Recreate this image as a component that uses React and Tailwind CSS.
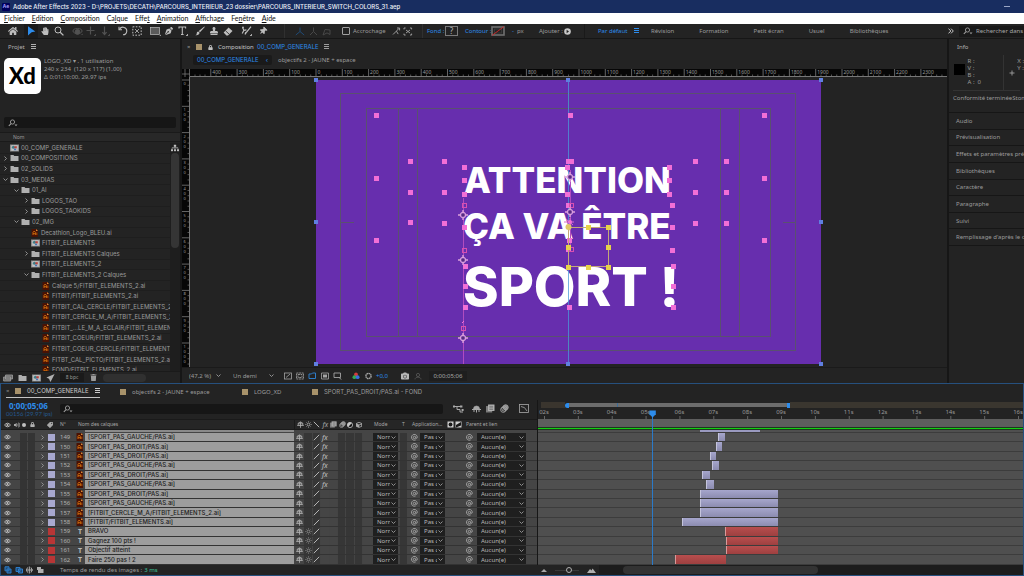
import React, { useState } from "react";
import {
  FaHome,
  FaHandPaper,
  FaStamp,
  FaThumbtack,
  FaPenNib,
  FaTrash,
  FaCamera,
  FaVolumeUp,
  FaLock,
  FaTag,
  FaSitemap,
  FaCube,
} from "react-icons/fa";

const MENUS = [
  "Fichier",
  "Edition",
  "Composition",
  "Calque",
  "Effet",
  "Animation",
  "Affichage",
  "Fenêtre",
  "Aide",
];
const MENU_KEYS = [0, 0, 0, 2, 4, 0, 0, 2, 0];

const WORKSPACES = ["Révision", "Formation", "Petit écran", "Usuel", "Bibliothèques"];

const PROJECT_ITEMS = [
  { name: "00_COMP_GENERALE", type: "comp", level: 0 },
  { name: "00_COMPOSITIONS", type: "folder", level: 0, arrow: "closed" },
  { name: "02_SOLIDS", type: "folder", level: 0, arrow: "closed" },
  { name: "03_MEDIAS", type: "folder", level: 0, arrow: "open" },
  { name: "01_AI", type: "folder", level: 1, arrow: "open" },
  { name: "LOGOS_TAO", type: "folder", level: 2, arrow: "closed" },
  { name: "LOGOS_TAOKIDS", type: "folder", level: 2, arrow: "closed" },
  { name: "02_IMG", type: "folder", level: 1, arrow: "open" },
  { name: "Decathlon_Logo_BLEU.ai", type: "ai", level: 2 },
  { name: "FITBIT_ELEMENTS", type: "comp", level: 2 },
  { name: "FITBIT_ELEMENTS Calques", type: "folder", level: 2, arrow: "closed" },
  { name: "FITBIT_ELEMENTS_2", type: "comp", level: 2 },
  { name: "FITBIT_ELEMENTS_2 Calques", type: "folder", level: 2, arrow: "open" },
  { name: "Calque 5/FITBIT_ELEMENTS_2.ai", type: "ai", level: 3 },
  { name: "FITBIT/FITBIT_ELEMENTS_2.ai", type: "ai", level: 3 },
  { name: "FITBIT_CAL_CERCLE/FITBIT_ELEMENTS_2.ai", type: "ai", level: 3 },
  { name: "FITBIT_CERCLE_M_A/FITBIT_ELEMENTS_2.ai", type: "ai", level: 3 },
  { name: "FITBIT_...LE_M_A_ECLAIR/FITBIT_ELEMENTS_2.ai", type: "ai", level: 3 },
  { name: "FITBIT_COEUR/FITBIT_ELEMENTS_2.ai", type: "ai", level: 3 },
  { name: "FITBIT_COEUR_CERCLE/FITBIT_ELEMENTS_2.ai", type: "ai", level: 3 },
  { name: "FITBT_CAL_PICTO/FITBIT_ELEMENTS_2.ai", type: "ai", level: 3 },
  { name: "FOND/FITBIT_ELEMENTS_2.ai", type: "ai", level: 3 },
];

const INDENTS = ["pl-0", "pl-[11px]", "pl-[21px]", "pl-[32px]"];

const PANELS = [
  "Audio",
  "Prévisualisation",
  "Effets et paramètres prédéfinis",
  "Bibliothèques",
  "Caractère",
  "Paragraphe",
  "Suivi",
  "Remplissage d'après le contenu",
];

// start / end are in timeline pixels
const LAYERS = [
  { id: 149, name: "[SPORT_PAS_GAUCHE/PAS.ai]", fx: true, start: 180, end: 187 },
  { id: 150, name: "[SPORT_PAS_DROIT/PAS.ai]", fx: true, start: 178, end: 184 },
  { id: 151, name: "[SPORT_PAS_DROIT/PAS.ai]", fx: true, start: 172, end: 178 },
  { id: 152, name: "[SPORT_PAS_GAUCHE/PAS.ai]", fx: true, start: 174, end: 181 },
  { id: 153, name: "[SPORT_PAS_DROIT/PAS.ai]", fx: true, start: 164, end: 172 },
  { id: 154, name: "[SPORT_PAS_GAUCHE/PAS.ai]", fx: true, start: 168, end: 176 },
  { id: 155, name: "[SPORT_PAS_DROIT/PAS.ai]", start: 162, end: 240 },
  { id: 156, name: "[SPORT_PAS_GAUCHE/PAS.ai]", start: 162, end: 240 },
  { id: 157, name: "[FITBIT_CERCLE_M_A/FITBIT_ELEMENTS_2.ai]", start: 162, end: 240 },
  { id: 158, name: "[FITBIT/FITBIT_ELEMENTS.ai]", start: 144, end: 240 },
  { id: 159, name: "BRAVO", text: true, start: 187, end: 240 },
  { id: 160, name: "Gagnez 100 pts !", text: true, start: 188, end: 240 },
  { id: 161, name: "Objectif atteint", text: true, start: 188, end: 240 },
  { id: 162, name: "Faire 250 pas ! 2", text: true, start: 137, end: 188 },
];

const PINK_HANDLES = [
  [60, 35], [254, 35], [448, 35], [60, 98], [448, 98], [60, 160], [448, 160],
  [94, 81], [128, 81], [94, 112], [128, 112], [94, 142], [128, 143],
  [379, 81], [410, 81], [379, 112], [410, 112], [379, 143], [410, 143],
  [148, 87], [148, 100], [148, 114], [252, 81], [255, 81], [251, 87], [251, 114],
  [353, 87], [353, 100], [353, 114], [252, 125], [356, 125], [148, 147],
  [356, 147], [356, 170], [252, 169], [253, 160], [149, 186], [149, 206], [149, 227],
  [253, 227], [357, 186], [357, 206], [357, 227],
];
const PINK_OUTLINES = [[148, 125], [148, 170], [147, 248], [255, 125], [255, 169]];
const ANCHORS = [[147, 135], [147, 180], [147, 258], [254, 97], [254, 132]];
const BLUE_HANDLES = [
  [0, 0], [252, 0], [505, 0], [0, 142], [505, 142], [0, 284], [252, 284], [505, 284],
];
const YELLOW_HANDLES = [
  [272, 147], [292, 147], [252, 167], [292, 167], [252, 187], [272, 187], [292, 187],
];

function MenuIcon({ className = "" }) {
  return (
    <svg className={className} width="5" height="6" viewBox="0 0 5 6" stroke="currentColor">
      <path d="M0 0.5h5M0 2.5h5M0 4.5h5" strokeWidth="1" />
    </svg>
  );
}

function Chevron({ open = false }) {
  return (
    <svg width="5" height="5" viewBox="0 0 5 5" fill="none" stroke="currentColor">
      <path d={open ? "M0.5 1.5l2 2l2-2" : "M1.5 0.5l2 2l-2 2"} strokeWidth="0.9" />
    </svg>
  );
}

function SearchIcon() {
  return (
    <svg className="shrink-0" width="10" height="8" viewBox="0 0 10 8" fill="none" stroke="#a0a0a0">
      <circle cx="4.5" cy="3" r="2.1" strokeWidth="0.9" />
      <path d="M3 4.6L0.8 7" strokeWidth="1.1" />
      <path d="M6.5 5.6h3l-1.5 1.6z" fill="#a0a0a0" stroke="none" />
    </svg>
  );
}

function AiIcon() {
  return (
    <svg className="shrink-0" width="8" height="8" viewBox="0 0 8 8">
      <path d="M0.5 0h5L7 1.6V8H0.5z" fill="#4a1204" />
      <path d="M5 0l2 2H5z" fill="#d98a3a" />
      <path d="M2 6V3.4L3.2 2L4.4 3.4V6M2 4.7h2.4" fill="none" stroke="#e0780f" strokeWidth="0.8" />
      <path d="M5.8 3.6V6" stroke="#c9640f" strokeWidth="0.8" />
    </svg>
  );
}

function CompIcon() {
  return (
    <svg className="shrink-0" width="9" height="8" viewBox="0 0 9 8">
      <rect x="0" y="0.5" width="9" height="7" fill="#8d8d8d" />
      <rect x="1.2" y="1.2" width="6.6" height="5.6" fill="#c4c4c4" />
      <circle cx="3.4" cy="3.3" r="1.5" fill="#3f7d86" />
      <rect x="4.4" y="2.2" width="2.4" height="2.2" fill="#b8423c" />
      <path d="M3.6 6.2l1.4-2.2l1.6 2.2z" fill="#3d6fb5" />
    </svg>
  );
}

function FolderIcon() {
  return (
    <svg className="shrink-0" width="9" height="8" viewBox="0 0 9 8" fill="#b0b0b0">
      <path d="M0.5 1h3l0.8 1H8.5v5h-8z" />
    </svg>
  );
}

function EyeIcon() {
  return (
    <svg width="7" height="6" viewBox="0 0 7 6" fill="none" stroke="#c0c0c0">
      <path d="M0.5 3Q3.5 -0.6 6.5 3Q3.5 6.6 0.5 3z" strokeWidth="0.9" />
      <circle cx="3.5" cy="3" r="1.1" fill="#c0c0c0" stroke="none" />
    </svg>
  );
}

function ShyIcon() {
  return (
    <svg width="7" height="7" viewBox="0 0 7 7" fill="none" stroke="#b4b4b4">
      <path d="M1.2 4V2.2Q3.5-0.4 5.8 2.2V4M0.2 4.5h6.6M1.2 2.8h4.6M3.5 1v5.8" strokeWidth="0.8" />
    </svg>
  );
}

function SunIcon({ color = "#8a8a8a" }) {
  return (
    <svg width="7" height="7" viewBox="0 0 7 7" fill="none" stroke={color}>
      <circle cx="3.5" cy="3.5" r="1.4" strokeWidth="0.9" />
      <path
        d="M3.5 0.2v1M3.5 5.8v1M0.2 3.5h1M5.8 3.5h1M1.2 1.2l0.6 0.6M5.2 5.2l0.6 0.6M5.8 1.2l-0.6 0.6M1.2 5.8l0.6-0.6"
        strokeWidth="0.7"
      />
    </svg>
  );
}

function SlashIcon({ back = false }) {
  return (
    <svg width="7" height="7" viewBox="0 0 7 7" stroke="#c4c4c4" strokeWidth="0.9">
      <path d={back ? "M0.8 0.8l5.4 5.4" : "M0.8 6.2l5.4-5.4"} />
    </svg>
  );
}

function WhipIcon() {
  return (
    <svg width="7" height="7" viewBox="0 0 7 7" fill="none" stroke="#b0b0b0">
      <path
        d="M4.7 3.5a1.2 1.2 0 1 1-1.2-1.2a1.2 1.2 0 0 1 1.2 1.2c0 1.3 1.6 1 1.6-0.2a2.9 2.9 0 1 0-1.6 2.6"
        strokeWidth="0.8"
      />
    </svg>
  );
}

function BlendIcon({ size = 7 }) {
  return (
    <svg width={size} height={size} viewBox="0 0 7 7">
      <rect x="0" y="1.6" width="4.8" height="5" fill="#7c7c7c" />
      <rect x="1.6" y="0.4" width="5" height="5" fill="#b4b4b4" />
      <path d="M2.6 1.8h3M2.6 3h3M2.6 4.2h3" stroke="#555" strokeWidth="0.5" />
    </svg>
  );
}

function BlurIcon({ size = 7 }) {
  return (
    <svg width={size} height={size} viewBox="0 0 7 7" fill="none" stroke="#a4a4a4" strokeWidth="0.7">
      <circle cx="4.4" cy="2.6" r="2" fill="#8a8a8a" />
      <circle cx="3.4" cy="3.6" r="2" />
      <circle cx="2.5" cy="4.5" r="2" />
    </svg>
  );
}

function ToolButton({ label, className = "", children }) {
  return (
    <button
      type="button"
      aria-label={label}
      className={`flex h-full w-[14px] shrink-0 items-center justify-center ${className}`}
    >
      {children}
    </button>
  );
}

function TitleBar() {
  return (
    <header className="flex h-[13px] shrink-0 items-center bg-[#182d60] pl-[2px] text-[#eef1f8]">
      <div className="flex h-[8px] w-[8px] items-center justify-center rounded-[1px] bg-[#00005b] text-[5px] leading-none font-bold text-[#a9a4ff]">
        Ae
      </div>
      <h1 className="ml-[3px] flex-1 font-[Inter] text-[6px] leading-none font-medium whitespace-nowrap">
        Adobe After Effects 2023 - D:\PROJETS\DECATH\PARCOURS_INTERIEUR_23
        dossier\PARCOURS_INTERIEUR_SWITCH_COLORS_31.aep
      </h1>
      <button type="button" aria-label="Réduire" className="mr-[14px] h-px w-[6px] bg-[#9aa6c6]" />
    </header>
  );
}

function MenuBar() {
  return (
    <nav className="flex h-[11px] shrink-0 items-center gap-[7px] bg-white pl-[4px] font-[Lato] text-[7px] leading-none text-[#101010]">
      {MENUS.map((menu, i) => (
        <button type="button" key={menu}>
          {menu.slice(0, MENU_KEYS[i])}
          <u>{menu[MENU_KEYS[i]]}</u>
          {menu.slice(MENU_KEYS[i] + 1)}
        </button>
      ))}
    </nav>
  );
}

function Toolbar() {
  const [snap, setSnap] = useState(false);

  return (
    <div className="flex h-[15px] shrink-0 items-center border-b border-[#161616] bg-[#232323] text-[6px] leading-none whitespace-nowrap text-[#9c9c9c]">
      <div className="flex h-full w-[284px] shrink-0 items-center text-[#bdbdbd]">
        <ToolButton label="Accueil" className="ml-[6px]">
          <FaHome size={10} />
        </ToolButton>
        <ToolButton label="Sélection" className="ml-[4px] bg-[#1b1b1b]">
          <svg width="9" height="10" viewBox="0 0 9 10" fill="#2d8ceb">
            <path d="M1 0.3L8.3 5.6L4.6 6.3L1 9.6z" />
          </svg>
        </ToolButton>
        <ToolButton label="Main">
          <FaHandPaper size={8} />
        </ToolButton>
        <ToolButton label="Zoom">
          <svg width="10" height="10" viewBox="0 0 10 10" fill="none" stroke="currentColor">
            <circle cx="4" cy="4" r="3" strokeWidth="1" />
            <path d="M6.2 6.2L9.4 9.4" strokeWidth="1.3" />
          </svg>
        </ToolButton>
        <ToolButton label="Orbite" className="ml-[4px] text-[#525252]">
          <svg width="11" height="9" viewBox="0 0 11 9" fill="none" stroke="currentColor">
            <ellipse cx="5.5" cy="4" rx="4.5" ry="2.4" />
            <circle cx="5.5" cy="5" r="2.4" fill="currentColor" />
            <path d="M9 8h1.6v-1.6z" fill="currentColor" stroke="none" />
          </svg>
        </ToolButton>
        <ToolButton label="Panoramique" className="text-[#525252]">
          <svg width="10" height="10" viewBox="0 0 10 10" fill="none" stroke="currentColor">
            <path d="M4.5 0.5v8M0.5 4.5h8" strokeWidth="1.2" />
            <path d="M8.4 9.6h1.2v-1.2z" fill="currentColor" />
          </svg>
        </ToolButton>
        <ToolButton label="Travelling" className="text-[#525252]">
          <svg width="10" height="10" viewBox="0 0 10 10" fill="none" stroke="currentColor">
            <path d="M4.5 0.5v8M2.4 6.2l2.1 2.3l2.1-2.3" strokeWidth="1.2" />
            <path d="M8.4 9.6h1.2v-1.2z" fill="currentColor" />
          </svg>
        </ToolButton>
        <ToolButton label="Rotation" className="ml-[4px]">
          <svg width="10" height="10" viewBox="0 0 10 10" fill="none" stroke="currentColor">
            <path d="M1.6 3.2A3.8 3.8 0 1 1 5 8.8" strokeWidth="1.1" />
            <path d="M1 0.8v3h3" strokeWidth="1.1" />
          </svg>
        </ToolButton>
        <ToolButton label="Point d'ancrage">
          <svg width="10" height="10" viewBox="0 0 10 10" fill="none" stroke="currentColor">
            <rect x="0.8" y="0.8" width="8.4" height="8.4" strokeDasharray="1.6 1.4" />
            <path d="M3 3l4 4M7 3L3 7" strokeWidth="0.8" />
          </svg>
        </ToolButton>
        <ToolButton label="Rectangle" className="ml-[4px]">
          <svg width="11" height="9" viewBox="0 0 11 9" stroke="currentColor">
            <rect x="0.5" y="0.5" width="9" height="7" fill="#5a5a5a" strokeWidth="0.7" />
            <path d="M9.4 9h1.4v-1.4z" fill="currentColor" stroke="none" />
          </svg>
        </ToolButton>
        <ToolButton label="Plume">
          <FaPenNib size={8} />
        </ToolButton>
        <ToolButton label="Texte">
          <svg width="10" height="10" viewBox="0 0 10 10" fill="none" stroke="currentColor">
            <path d="M1 2.4V1h6.6v1.4M4.3 1v7.4M3 8.5h2.6" strokeWidth="1.1" />
            <path d="M8.4 9.6h1.2v-1.2z" fill="currentColor" />
          </svg>
        </ToolButton>
        <ToolButton label="Pinceau" className="ml-[3px]">
          <svg width="10" height="10" viewBox="0 0 10 10" fill="currentColor">
            <path d="M9.4 0.4L3.8 5L5 6.2L9.8 0.9zM3.3 5.5Q1.6 5.6 1.7 7.4T0.3 9.2Q4.2 9.6 4.6 6.8z" />
          </svg>
        </ToolButton>
        <ToolButton label="Tampon">
          <FaStamp size={8} />
        </ToolButton>
        <ToolButton label="Gomme">
          <svg width="10" height="9" viewBox="0 0 10 9" fill="currentColor">
            <path d="M5.6 0.5L9.5 4L5 8.5H3.4L0.6 5.6z" />
            <path d="M2.6 3.8L6 7" stroke="#232323" strokeWidth="0.8" />
          </svg>
        </ToolButton>
        <ToolButton label="Roto-pinceau" className="ml-[4px]">
          <svg width="11" height="10" viewBox="0 0 11 10" fill="none" stroke="currentColor">
            <path d="M10 0.6L5.6 6L4 8.4L5 6M1.6 1.4l1.2 3L1.2 7.6M2.8 4.4l2.6-0.6" strokeWidth="1.2" />
            <circle cx="2" cy="1.4" r="0.9" fill="currentColor" stroke="none" />
            <path d="M9.4 9.6h1.2v-1.2z" fill="currentColor" />
          </svg>
        </ToolButton>
        <ToolButton label="Marionnette" className="ml-[3px]">
          <FaThumbtack size={8} className="rotate-45" />
        </ToolButton>
      </div>

      <div className="flex h-full w-[58px] shrink-0 items-center border-l border-[#303030] pl-[9px] text-[#484848]">
        <svg width="40" height="9" viewBox="0 0 40 9" fill="none" stroke="currentColor">
          <path d="M6 0.5v4L1.8 8M6 4.5L10.2 8" stroke="#1f4a75" />
          <path d="M19.5 0.5v4L16 8M19.5 4.5L23 8" />
          <path d="M29 8l2-5.5l5 0.5v4.5l-3-1.6z" />
        </svg>
      </div>
      <label className="flex w-[50px] shrink-0 items-center gap-[3px]">
        <input
          type="checkbox"
          checked={snap}
          onChange={(e) => setSnap(e.target.checked)}
          className="h-[8px] w-[8px] shrink-0 appearance-none rounded-[1px] border border-[#a0a0a0] checked:bg-[#2d8ceb]"
        />
        Accrochage
      </label>
      <svg className="shrink-0" width="30" height="9" viewBox="0 0 30 9" fill="none" stroke="currentColor">
        <path d="M1 7.5l3.4-3.4l1.8 3M4.4 4.1L7 1.4M5 1h2.6v2.4" />
        <path d="M12 2.4V1h1.6M18 1h1.6v1.4M19.6 6.6V8H18M13.6 8H12V6.6M14 3l4 3M18 3l-4 3" />
      </svg>
      <div className="flex h-full shrink-0 items-center border-l border-[#303030] pl-[4px]">
        <button type="button" className="w-[18px] text-left text-[#2d8ceb]">
          Fond :
        </button>
        <button
          type="button"
          className="flex h-[10px] w-[13px] items-center justify-center border border-[#7a7a7a] text-[8px] leading-none text-[#b5b5b5]"
        >
          ?
        </button>
        <button type="button" className="ml-[7px] w-[26px] text-left text-[#2d8ceb]">
          Contour :
        </button>
        <button type="button" aria-label="Couleur du contour">
          <svg width="14" height="10" viewBox="0 0 14 10" fill="none">
            <rect x="1" y="1" width="12" height="8" stroke="#707070" strokeWidth="1.6" />
            <rect x="3.4" y="3" width="7.2" height="4" stroke="#3c3c3c" />
            <path d="M1 9.4L13 0.6" stroke="#d02828" strokeWidth="0.9" />
          </svg>
        </button>
        <span className="ml-[7px] text-[#2d8ceb]">-</span>
        <span className="ml-[3px] w-[22px]">px</span>
        <span className="w-[25px]">Ajouter :</span>
        <button type="button" aria-label="Ajouter">
          <svg width="7" height="7" viewBox="0 0 7 7">
            <circle cx="3.5" cy="3.5" r="3.3" fill="#c8c8c8" />
            <path d="M2.6 1.8l2.4 1.7l-2.4 1.7z" fill="#232323" />
          </svg>
        </button>
      </div>
      <div className="ml-[13px] flex h-full flex-1 items-center border-l border-[#1a1a1a] pl-[13px]">
        <button type="button" className="w-[36px] text-left text-[#2d8ceb]">
          Par défaut
        </button>
        <MenuIcon className="text-[#2d8ceb]" />
        <div className="ml-[12px] flex items-center gap-[25px]">
          {WORKSPACES.map((name) => (
            <button type="button" key={name}>
              {name}
            </button>
          ))}
        </div>
        <button type="button" aria-label="Plus d'espaces" className="mr-[5px] ml-auto text-[#c8c8c8]">
          <svg width="6" height="6" viewBox="0 0 6 6" fill="none" stroke="currentColor">
            <path d="M0.5 0.6L2.8 3L0.5 5.4M3 0.6L5.3 3L3 5.4" />
          </svg>
        </button>
      </div>
      <label className="flex h-[11px] w-[65px] shrink-0 items-center bg-[#191919] pl-[4px]">
        <SearchIcon />
        <input
          type="text"
          aria-label="Rechercher dans l'aide"
          placeholder="Rechercher dans l'aide"
          className="ml-[3px] w-full min-w-0 bg-transparent text-[6px] leading-none outline-none placeholder:text-[#a8a8a8]"
        />
      </label>
    </div>
  );
}

function ProjectPanel() {
  const [search, setSearch] = useState("");

  return (
    <section className="flex w-[180px] shrink-0 flex-col bg-[#232323] text-[6px] leading-none whitespace-nowrap text-[#9c9c9c]">
      <div className="flex h-[16px] shrink-0 items-center gap-[6px] pl-[8px] text-[#b0b0b0]">
        <h2>Projet</h2>
        <MenuIcon />
      </div>
      <div className="flex h-[61px] shrink-0 gap-[3px] pt-[3px] pl-[4px]">
        <div className="flex h-[36px] w-[37px] items-center justify-center rounded-[5px] bg-white font-[Lato] text-[22px] leading-none font-black text-black">
          Xd
        </div>
        <div className="flex flex-col gap-px leading-[7px]">
          <p>LOGO_XD ▾ , 1 utilisation</p>
          <p>240 x 234 &nbsp;(120 x 117) (1,00)</p>
          <p>Δ 0;01;10;00, 29,97 ips</p>
        </div>
      </div>
      <label className="mx-[4px] mt-[1px] flex h-[11px] shrink-0 items-center rounded-[2px] bg-[#161616] pl-[4px]">
        <SearchIcon />
        <input
          type="text"
          aria-label="Rechercher dans le projet"
          value={search}
          onChange={(e) => setSearch(e.target.value)}
          className="w-full bg-transparent outline-none"
        />
      </label>
      <div className="mt-[4px] flex h-[10px] shrink-0 items-center border-y border-[#1a1a1a] bg-[#282828] pl-[13px] text-[5px]">
        Nom
      </div>
      <div className="flex min-h-0 flex-1 overflow-hidden pt-px">
        <ul className="flex h-[233px] min-w-0 flex-1 flex-col font-[Inter]">
          {PROJECT_ITEMS.map((item) => (
            <li
              key={item.name}
              className={`flex min-h-0 flex-1 items-center overflow-hidden border-b border-[#1e1e1e] ${INDENTS[item.level]}`}
            >
              <span className="flex w-[10px] shrink-0 justify-center">
                {item.arrow && <Chevron open={item.arrow === "open"} />}
              </span>
              {item.type === "ai" && <AiIcon />}
              {item.type === "comp" && <CompIcon />}
              {item.type === "folder" && <FolderIcon />}
              <span className="ml-[2px]">{item.name}</span>
            </li>
          ))}
        </ul>
        <div className="flex w-[10px] shrink-0 flex-col items-center bg-[#1e1e1e] pt-[1px] text-[#c0c0c0]">
          <FaSitemap size={8} />
          <div className="mt-[1px] h-[95px] w-[8px] rounded-full bg-[#353535]" />
        </div>
      </div>
      <div className="flex h-[12px] shrink-0 items-center gap-[5px] border-t border-[#1a1a1a] pl-[3px]">
        <svg width="10" height="8" viewBox="0 0 10 8" fill="none" stroke="#a0a0a0">
          <path d="M2.5 1h7v4h-7zM0.6 3h7v4h-7z" fill="#6a6a6a" strokeWidth="0.8" />
        </svg>
        <FolderIcon />
        <CompIcon />
        <svg width="9" height="8" viewBox="0 0 9 8" fill="#b0b0b0">
          <path d="M8.6 0L0.4 3.6l2.6 1.2L4.4 8l1.4-2.6z" />
        </svg>
        <button
          type="button"
          className="flex h-[9px] w-[24px] items-center justify-center bg-[#1a1a1a] text-[5px]"
        >
          8 bpc
        </button>
        <FaTrash size={7} className="mx-px" />
        <div className="h-[8px] w-[43px] rounded-full bg-[#303030]" />
      </div>
    </section>
  );
}

function HorizontalRuler() {
  const labels = [];
  for (let n = -400; n <= 2300; n += 100) labels.push(n);
  const origin = 126;
  const step = 26.3;

  return (
    <svg className="block h-[8px] min-w-0 flex-1 bg-[#060606]" fill="none">
      {labels.map((n) => {
        const x = origin + (n / 100) * step;
        return (
          <g key={n}>
            <path d={`M${x} 0v8`} stroke="#7c7c7c" strokeWidth="0.8" />
            {[1, 2, 3, 4].map((m) => (
              <path key={m} d={`M${x + (m * step) / 5} 5.5v2.5`} stroke="#6a6a6a" strokeWidth="0.8" />
            ))}
            <text x={x + 1.5} y="5" fontSize="5" fill="#9a9a9a">
              {Math.abs(n)}
            </text>
          </g>
        );
      })}
      <path d="M5 5.5v2.5M10 5.5v2.5M15 5.5v2.5" stroke="#6a6a6a" strokeWidth="0.8" />
      <path d="M0 7.5h800" stroke="#777" />
    </svg>
  );
}

function VerticalRuler() {
  const labels = [];
  for (let n = 0; n <= 1000; n += 100) labels.push(n);
  const step = 26.3;

  return (
    <svg className="block w-[8px] shrink-0 bg-[#060606]" fill="none">
      {labels.map((n) => {
        const y = 3 + (n / 100) * step;
        return (
          <g key={n}>
            <path d={`M0 ${y}h8`} stroke="#7c7c7c" strokeWidth="0.8" />
            {[1, 2, 3, 4].map((m) => (
              <path key={m} d={`M5.5 ${y + (m * step) / 5}h2.5`} stroke="#6a6a6a" strokeWidth="0.8" />
            ))}
            {String(n)
              .split("")
              .map((digit, i) => (
                <text key={i} x="1.5" y={y + 5 + i * 5} fontSize="4" fill="#9a9a9a">
                  {digit}
                </text>
              ))}
          </g>
        );
      })}
      <path d="M7.5 0v400" stroke="#777" />
    </svg>
  );
}

function Guides() {
  return (
    <svg
      className="absolute inset-0 overflow-visible"
      width="505"
      height="284"
      viewBox="0 0 505 284"
      fill="none"
    >
      <g stroke="#5a5070" strokeWidth="1">
        <rect x="24.5" y="13.5" width="455" height="257" />
        <rect x="50.5" y="28.5" width="404" height="228" />
        <path d="M82.5 28v228M101.5 28v228M404.5 28v228M423.5 28v228" />
        <path d="M25 142.5h13M467 142.5h13M252.5 13v14M252.5 258v13" />
      </g>
      <path d="M252.5 0v284" stroke="#4a9ad8" strokeWidth="1" opacity="0.75" />
      <path d="M147.5 118v166" stroke="#b04cc0" strokeWidth="1" />
      <path d="M254.5 90v82" stroke="#b04cc0" strokeWidth="1" />
      {PINK_HANDLES.map(([x, y], i) => (
        <rect key={i} x={x - 2} y={y - 2} width="5" height="5" fill="#f26fd6" />
      ))}
      {PINK_OUTLINES.map(([x, y], i) => (
        <rect key={i} x={x - 1.5} y={y - 1.5} width="4" height="4" stroke="#d84fb0" />
      ))}
      {ANCHORS.map(([x, y], i) => (
        <g key={i} transform={`translate(${x} ${y})`} stroke="#dba0dc">
          <circle r="2.6" strokeWidth="1.2" fill="#6b3a9e" />
          <path d="M-5 0h2M3 0h2M0-5v2M0 3v2" strokeWidth="1.4" />
          <circle r="0.8" fill="#3c2050" stroke="none" />
        </g>
      ))}
      <path d="M146 243l2-2" stroke="#f26fd6" />
      <rect x="252.5" y="147.5" width="40" height="39" stroke="#c4a878" />
      {YELLOW_HANDLES.map(([x, y], i) => (
        <rect key={i} x={x - 2} y={y - 2} width="5" height="5" fill="#e6d34a" />
      ))}
      <path d="M248 142h10M254 138v8M250 139l7 6" stroke="#d86fd0" strokeWidth="1" />
      <circle cx="254" cy="142" r="2" fill="#f26fd6" />
      <circle cx="252.5" cy="147" r="3" fill="#e0c868" />
      {BLUE_HANDLES.map(([x, y], i) => (
        <rect key={i} x={x - 2} y={y - 2} width="4" height="4" fill="#5f7fe0" />
      ))}
    </svg>
  );
}

function CompositionPanel() {
  return (
    <section className="flex min-w-0 flex-1 flex-col bg-[#232323] text-[6px] leading-none whitespace-nowrap text-[#9c9c9c]">
      <div className="flex h-[16px] shrink-0 items-center pl-[5px]">
        <button type="button" className="w-[9px] text-left">
          ×
        </button>
        <span className="h-[6px] w-[6px] bg-[#a8926a]" />
        <FaLock size={5} className="ml-[6px] text-[#c0c0c0]" />
        <h2 className="ml-[5px] w-[39px] text-[#c8c8c8]">Composition</h2>
        <span className="w-[67px] font-[Inter] text-[#2d8ceb]">00_COMP_GENERALE</span>
        <MenuIcon />
      </div>
      <div className="flex h-[14px] shrink-0 items-start pl-[11px]">
        <button type="button" className="flex h-[10px] w-[79px] items-center justify-between rounded-[2px] bg-[#1a1a1a] px-[4px] font-[Inter] text-[#2d8ceb]">
          00_COMP_GENERALE
          <span>‹</span>
        </button>
        <button type="button" className="ml-[6px] h-[10px]">
          objectifs 2 - JAUNE + espace
        </button>
      </div>
      <div className="flex h-[8px] shrink-0">
        <svg className="block w-[8px] bg-[#060606]" viewBox="0 0 8 8" stroke="#777" strokeWidth="0.8">
          <path d="M0 5h8M3 0v8M7.6 0v8" />
        </svg>
        <HorizontalRuler />
      </div>
      <div className="flex min-h-0 flex-1">
        <VerticalRuler />
        <div className="flex flex-1 items-center justify-center">
          <div className="relative h-[284px] w-[505px] bg-[#672eae] font-[Inter] font-extrabold text-white">
            <p className="absolute top-[82px] left-[148px] text-[35px] leading-[36px]">ATTENTION</p>
            <p className="absolute top-[128px] left-[147px] text-[35px] leading-[36px]">ÇA VA ÊTRE</p>
            <p className="absolute top-[180px] left-[147px] text-[54px] leading-[54px]">SPORT !</p>
            <Guides />
          </div>
        </div>
      </div>
      <div className="flex h-[16px] shrink-0 items-center border-t border-[#1a1a1a] pl-[3px]">
        <label className="relative flex w-[42px] items-center">
          <select aria-label="Zoom" className="w-full appearance-none bg-transparent pl-[4px] leading-none">
            <option>(47,2 %)</option>
          </select>
          <span className="absolute right-[6px]">
            <Chevron open />
          </span>
        </label>
        <label className="relative flex w-[50px] items-center">
          <select aria-label="Résolution" className="w-full appearance-none bg-transparent pl-[6px] leading-none">
            <option>Un demi</option>
          </select>
          <span className="absolute right-[3px]">
            <Chevron open />
          </span>
        </label>
        <svg className="ml-[6px]" width="60" height="8" viewBox="0 0 60 8" fill="none" stroke="#a4a4a4">
          <rect x="1.5" y="1" width="7" height="6" strokeWidth="0.8" />
          <path d="M3 5.5l4-3.4" strokeWidth="0.8" />
          <path d="M13.5 1h7v6h-7zM15 2.5h4v3h-4z" strokeWidth="0.8" strokeDasharray="2 0.6" />
          <path d="M26 6.5V2h2.5l1-1h3v5.5z" stroke="#2d7cc8" />
          <path d="M38.5 1h7v6h-7z" strokeWidth="0.8" />
          <rect x="40" y="2.5" width="4" height="3" fill="#a4a4a4" stroke="none" />
          <path d="M51 1h6.5v4.5H51zM56 5.5l2.4 2" strokeWidth="0.9" />
        </svg>
        <svg className="ml-[8px]" width="25" height="8" viewBox="0 0 25 8">
          <circle cx="5" cy="2.4" r="1.9" fill="#d33c3c" />
          <circle cx="3.4" cy="5.2" r="1.9" fill="#35a853" />
          <circle cx="6.6" cy="5.2" r="1.9" fill="#3a6fe0" />
          <circle cx="17.5" cy="4" r="2.6" fill="none" stroke="#a4a4a4" strokeWidth="1.4" strokeDasharray="1.6 0.4" />
        </svg>
        <span className="w-[25px] text-[#2d8ceb]">+0,0</span>
        <FaCamera size={8} className="text-[#b8b8b8]" />
        <svg className="ml-[5px]" width="9" height="8" viewBox="0 0 9 8" fill="none" stroke="#505050">
          <circle cx="4" cy="3" r="1.6" />
          <path d="M1 7.4c0-3 6-3 6 0" />
        </svg>
        <button type="button" className="ml-[6px] h-[10px] w-[38px] bg-[#1e1e1e] text-[#a8a8a8]">
          0;00;05;06
        </button>
      </div>
    </section>
  );
}

function SidePanels() {
  return (
    <aside className="w-[75px] shrink-0 overflow-hidden bg-[#232323] text-[6px] leading-none whitespace-nowrap text-[#9c9c9c]">
      <h2 className="flex h-[16px] items-center pl-[8px] text-[#b0b0b0]">Info</h2>
      <div className="flex h-[35px] pl-[5px]">
        <div className="mt-[9px] h-[11px] w-[11px] bg-black" />
        <dl className="ml-[3px] grid w-[38px] grid-cols-[10px_1fr] content-start border-r border-[#333] pt-[3px] leading-[7px]">
          <dt>R :</dt>
          <dd />
          <dt>V :</dt>
          <dd />
          <dt>B :</dt>
          <dd />
          <dt>A :</dt>
          <dd>0</dd>
        </dl>
        <svg className="mt-[15px] ml-[5px] shrink-0" width="6" height="6" viewBox="0 0 6 6" stroke="#a0a0a0">
          <path d="M3 0.5v5M0.5 3h5" strokeWidth="0.9" />
        </svg>
        <div className="ml-[2px] pt-[3px] leading-[7px]">
          <p>X :</p>
          <p>Y :</p>
        </div>
      </div>
      <p className="mx-[4px] flex h-[22px] border-t border-[#333] pt-[4px]">
        Conformité terminéeStom
      </p>
      <div className="flex h-[134px] flex-col border-t border-[#161616]">
        {PANELS.map((panel) => (
          <button
            type="button"
            key={panel}
            className="flex flex-1 items-center border-b border-[#161616] pl-[7px] text-left"
          >
            {panel}
          </button>
        ))}
      </div>
    </aside>
  );
}

function Switch({ dark = false, children }) {
  return (
    <span className="flex h-full flex-1 items-center justify-center border-r border-[#444]">
      <span className={`flex h-full w-full items-center justify-center ${dark ? "bg-[#363636]" : ""}`}>
        {children}
      </span>
    </span>
  );
}

function CellSelect({ label, value, className }) {
  return (
    <span className={`relative flex h-full items-center bg-[#1f1f1f] text-[#b8b8b8] ${className}`}>
      <select
        aria-label={label}
        className="h-full w-full appearance-none bg-transparent pr-[8px] pl-[4px] text-[6px] leading-none"
      >
        <option>{value}</option>
      </select>
      <span className="pointer-events-none absolute right-[2px] text-[#9a9a9a]">
        <Chevron open />
      </span>
    </span>
  );
}

function LayerRow({ layer }) {
  return (
    <tr className="flex min-h-0 flex-1 border-b border-[#333] bg-[#454545]">
      <td className="flex w-[36px] items-center">
        <span className="flex w-[13px] justify-center">
          <EyeIcon />
        </span>
        <span className="ml-[6px] h-full w-[7px] bg-[#343434]" />
        <span className="ml-[1px] h-full w-[7px] bg-[#343434]" />
      </td>
      <td className="flex w-[10px] items-center justify-center text-[#989898]">
        <Chevron />
      </td>
      <td className="flex w-[10px] items-center pl-[1px]">
        <span className={`h-[7px] w-[7px] ${layer.text ? "bg-[#b83636]" : "bg-[#a9a9cf]"}`} />
      </td>
      <td className="flex w-[18px] items-center pl-[3px] text-[#b0b0b0]">{layer.id}</td>
      <td className="flex w-[10px] items-center justify-center text-[7px] font-bold text-[#b8b8b8]">
        {layer.text ? "T" : <AiIcon />}
      </td>
      <td className="flex w-[209px] items-center bg-[#9d9d9d] pl-[3px] font-[Inter] leading-none font-medium text-[#1c1c1c]">
        {layer.name}
      </td>
      <td className="flex w-[79px] pl-[2px]">
        <div className="flex h-full w-[67px]">
          <Switch>
            <ShyIcon />
          </Switch>
          <Switch dark>{layer.text && <SunIcon />}</Switch>
          <Switch dark>
            <SlashIcon />
          </Switch>
          <Switch>{layer.fx && <i className="text-[7px] text-[#c0c0c0]">fx</i>}</Switch>
          <Switch />
          <Switch dark />
          <Switch dark />
          <Switch dark />
        </div>
      </td>
      <td className="flex w-[25px]">
        <CellSelect label="Mode" value="Normal" className="w-full" />
      </td>
      <td className="flex w-[10px] pl-[2px]">
        <span className="h-full w-[7px] bg-[#363636]" />
      </td>
      <td className="flex w-[38px] items-center">
        <span className="flex w-[12px] justify-center">
          <WhipIcon />
        </span>
        <CellSelect label="Application" value="Pas de cache" className="w-[25px]" />
      </td>
      <td className="flex flex-1 items-center pl-[17px]">
        <span className="flex w-[12px] justify-center">
          <WhipIcon />
        </span>
        <CellSelect label="Parent et lien" value="Aucun(e)" className="ml-[2px] w-[49px]" />
      </td>
    </tr>
  );
}

function LayerTable() {
  return (
    <table className="flex min-h-0 flex-1 flex-col text-[6px] leading-none whitespace-nowrap">
      <thead className="block shrink-0">
        <tr className="flex h-[11px] border-y border-[#1a1a1a] bg-[#262626] text-left text-[5px] text-[#a8a8a8] *:font-normal">
          <th className="flex w-[36px] items-center" aria-label="Commutateurs AV">
            <span className="flex w-[13px] justify-center">
              <EyeIcon />
            </span>
            <FaVolumeUp size={6} />
            <span className="ml-[2px] h-[4px] w-[4px] rounded-full bg-[#c0c0c0]" />
            <FaLock size={5} className="ml-[4px] text-[#b0b0b0]" />
          </th>
          <th className="w-[10px]" />
          <th className="flex w-[10px] items-center" aria-label="Etiquette">
            <FaTag size={6} className="rotate-90" />
          </th>
          <th className="flex w-[18px] items-center pl-[3px]">N°</th>
          <th className="flex w-[219px] items-center pl-[3px]">Nom des calques</th>
          <th className="flex w-[79px] border-l border-[#1a1a1a] pl-[1px]" aria-label="Options">
            <span className="flex w-[67px] items-center *:flex *:flex-1 *:justify-center">
              <span>
                <ShyIcon />
              </span>
              <span>
                <SunIcon color="#a8a8a8" />
              </span>
              <span>
                <SlashIcon back />
              </span>
              <i className="text-[7px] leading-none">fx</i>
              <span>
                <BlendIcon />
              </span>
              <span>
                <BlurIcon />
              </span>
              <span>
                <svg width="6" height="6" viewBox="0 0 6 6">
                  <circle cx="3" cy="3" r="2.6" fill="#161616" stroke="#c8c8c8" strokeWidth="0.8" />
                  <path d="M4.9 1.1A2.6 2.6 0 0 0 1.1 4.9z" fill="#c8c8c8" />
                </svg>
              </span>
              <span>
                <FaCube size={6} />
              </span>
            </span>
          </th>
          <th className="flex w-[25px] items-center pl-[1px]">Mode</th>
          <th className="flex w-[10px] items-center pl-[4px]">T</th>
          <th className="flex w-[38px] items-center pl-[4px]">Application...</th>
          <th className="flex flex-1 items-center pl-[1px]">
            <svg width="15" height="7" viewBox="0 0 15 7">
              <rect x="0.5" y="0.5" width="6" height="6" fill="#d0d0d0" />
              <circle cx="3.5" cy="3.5" r="1.9" fill="#1a1a1a" />
              <rect x="8.5" y="0.5" width="6" height="6" fill="#d0d0d0" />
              <path d="M9 6.5V4l5-3v3.4z" fill="#1a1a1a" />
            </svg>
            <span className="ml-[4px]">Parent et lien</span>
          </th>
        </tr>
      </thead>
      <tbody className="flex min-h-0 flex-1 flex-col">
        <tr className="flex h-[3px] shrink-0 bg-[#454545]">
          <td className="h-[2px] w-[84px]" />
          <td className="h-[2px] w-[209px] bg-[#8a8a8a]" />
        </tr>
        {LAYERS.map((layer) => (
          <LayerRow key={layer.id} layer={layer} />
        ))}
      </tbody>
    </table>
  );
}

function TimeGraph() {
  const seconds = Array.from({ length: 15 }, (_, i) => i + 2);

  return (
    <div className="relative flex min-w-0 flex-1 flex-col overflow-hidden border-l border-[#161616] bg-[#232323]">
      <div className="mt-[2px] flex h-[6px] shrink-0 items-center">
        <div className="ml-[3px] h-full w-[24px] bg-[#3a352e]" />
        <div className="h-[5px] w-[4px] rounded-l-full bg-[#2d8ceb]" />
        <div className="flex h-[4px] w-[218px] bg-[#6c6c6c] pl-[48px]">
          <span className="w-px bg-[#3c6c98]" />
        </div>
        <div className="h-[5px] w-[3px] bg-[#2d8ceb]" />
        <div className="h-full flex-1 bg-[#3a362f]" />
      </div>
      <svg className="block h-[11px] w-full shrink-0" fontSize="6" fill="#9a9a9a">
        {seconds.map((second, i) => (
          <g key={second}>
            <text x={6 + i * 33.86} y="6" textAnchor="middle">
              {String(second).padStart(2, "0") + "s"}
            </text>
            <path d={`M${6.5 + i * 33.86} 8v3`} stroke="#666" />
          </g>
        ))}
      </svg>
      <div className="h-[8px] shrink-0 bg-[#5e5e5e]" />
      <div className="h-[3px] shrink-0 bg-[#1c3a1c] py-px">
        <div className="h-px bg-[#14d014]" />
      </div>
      <ul className="flex min-h-0 flex-1 flex-col">
        <li className="h-[3px] shrink-0 border-b border-[#3c3c3c] bg-[#4f4f4f]">
          <div className="h-[2px] bg-[#9a9abf]" style={{ marginLeft: 162, width: 60 }} />
        </li>
        {LAYERS.map((layer) => (
          <li key={layer.id} className="flex min-h-0 flex-1 border-b border-[#3c3c3c] bg-[#4f4f4f]">
            <div
              className={
                layer.text
                  ? "border-l border-[#d89a9a] bg-linear-to-b from-[#b84e4e] to-[#9e4040]"
                  : "border-l border-[#c4c4dc] bg-linear-to-b from-[#a6a6cc] to-[#8c8cb0]"
              }
              style={{ marginLeft: layer.start, width: layer.end - layer.start }}
            />
          </li>
        ))}
      </ul>
      <svg
        className="absolute top-[10px] left-[111px] h-full w-[7px]"
        fill="#2d8ceb"
        aria-label="Tête de lecture"
      >
        <rect x="3" y="4" width="1" height="200" fill="#2b7ac8" />
        <path d="M0.4 0.5h6.4v3.8L3.6 7.6L0.4 4.3z" />
      </svg>
    </div>
  );
}

function CompTab({ children, className = "" }) {
  return (
    <button type="button" className={`flex h-full shrink-0 items-center gap-[6px] ${className}`}>
      <span className="h-[6px] w-[6px] bg-[#a8926a]" />
      {children}
    </button>
  );
}

function Timeline() {
  const [zoom, setZoom] = useState(60);

  return (
    <section className="flex h-[193px] shrink-0 flex-col border border-[#26507e] bg-[#232323] text-[6px] leading-none whitespace-nowrap text-[#9c9c9c]">
      <div className="flex h-[16px] shrink-0 pl-[5px]">
        <div className="flex h-[14px] w-[94px] shrink-0 items-center border-b border-[#c4c4c4] text-[#cccccc]">
          <button type="button" aria-label="Fermer" className="w-[9px] text-left text-[#8f8f8f]">
            ×
          </button>
          <CompTab className="font-[Inter]">00_COMP_GENERALE</CompTab>
          <MenuIcon className="ml-auto" />
        </div>
        <div className="flex h-[15px]">
          <CompTab className="ml-[20px] w-[122px]">objectifs 2 - JAUNE + espace</CompTab>
          <CompTab className="w-[70px]">LOGO_XD</CompTab>
          <CompTab className="font-[Inter]">SPORT_PAS_DROIT/PAS.ai - FOND</CompTab>
        </div>
      </div>
      <div className="flex min-h-0 flex-1">
        <div className="flex w-[536px] shrink-0 flex-col">
          <div className="flex h-[19px] shrink-0 items-start">
            <div className="w-[58px] pt-[1px] pl-[5px]">
              <p className="pl-[3px] text-[8px] leading-[9px] font-bold text-[#2d8ceb]">0;00;05;06</p>
              <p className="font-[Lato] text-[6px] leading-[7px] text-[#24598f]">00156 (29.97 ips)</p>
            </div>
            <label className="mt-[4px] ml-px flex h-[10px] w-[383px] items-center rounded-[2px] bg-[#161616] pl-[3px]">
              <SearchIcon />
              <input
                type="text"
                aria-label="Rechercher un calque"
                className="w-full bg-transparent text-[6px] outline-none"
              />
            </label>
            <div className="flex h-[17px] flex-1 items-center text-[#a8a8a8]">
              <svg className="ml-[10px]" width="11" height="8" viewBox="0 0 11 8" fill="none" stroke="currentColor">
                <path d="M1 1.5h3v3h3M4 1.5h4M7 4.5v2.5h3" />
                <path d="M0 0.5h2v2H0zM7 0.5h2.4v2H7zM8.6 4h2v2h-2z" fill="currentColor" stroke="none" />
              </svg>
              <svg className="ml-[8px]" width="9" height="8" viewBox="0 0 9 8" fill="none" stroke="currentColor">
                <path d="M1.5 4Q1.5 1 4.5 1T7.5 4z" fill="currentColor" strokeWidth="0.6" />
                <path d="M0 4.5h9M4.5 5v2.5M2 5v2M7 5v2" />
              </svg>
              <span className="ml-[5px]">
                <BlendIcon size={9} />
              </span>
              <span className="ml-[5px]">
                <BlurIcon size={9} />
              </span>
              <svg className="ml-[10px]" width="10" height="9" viewBox="0 0 10 9" fill="none" stroke="currentColor">
                <rect x="0.5" y="0.5" width="9" height="8" strokeWidth="0.8" />
                <path d="M2 2.5q4 0 6 4.5" strokeWidth="0.8" />
              </svg>
            </div>
          </div>
          <LayerTable />
        </div>
        <TimeGraph />
      </div>
      <div className="flex h-[10px] shrink-0 items-center bg-[#1c1c1c]">
        <div className="flex h-full w-[598px] shrink-0 items-center bg-[#232323]">
          <svg className="ml-[3px] w-[52px]" width="52" height="8" viewBox="0 0 52 8" fill="none">
            <path d="M1 0.8h4v4H1zM3 3h4v4H3z" fill="#1f4a75" stroke="#2d7cc8" />
            <path d="M12 1.5h4v4h-4zM14.5 3h4v4h-4z" fill="#1f4a75" stroke="#2d7cc8" />
            <path d="M23.5 1.5q-2 2.5 0 5M27 1.5q2 2.5 0 5M25.3 0.5v7M22 4h7" stroke="#b0b0b0" />
            <path d="M33 1h4v2h2.5v4H34V4h-1z" fill="#b0b0b0" />
          </svg>
          <p className="ml-[4px]">Temps de rendu des images :</p>
          <p className="ml-[2px] text-[#3fc49a]">3 ms</p>
          <svg className="ml-auto" width="6" height="4" viewBox="0 0 6 4" fill="#a8a8a8">
            <path d="M0 4l3-3l3 3z" />
          </svg>
          <input
            type="range"
            aria-label="Zoom du temps"
            value={zoom}
            onChange={(e) => setZoom(Number(e.target.value))}
            className="mx-[8px] h-[6px] w-[24px] appearance-none bg-linear-to-b from-transparent from-45% via-[#555] via-50% to-transparent to-65% [&::-webkit-slider-thumb]:h-[6px] [&::-webkit-slider-thumb]:w-[6px] [&::-webkit-slider-thumb]:appearance-none [&::-webkit-slider-thumb]:rounded-full [&::-webkit-slider-thumb]:border [&::-webkit-slider-thumb]:border-[#b0b0b0] [&::-webkit-slider-thumb]:bg-[#232323]"
          />
          <svg className="mr-[3px]" width="9" height="5" viewBox="0 0 9 5" fill="#b0b0b0">
            <path d="M0 5l3-4l1.5 1.6L5.6 0.6L9 5z" />
          </svg>
        </div>
        <div className="ml-[24px] h-[8px] w-[195px] rounded-full bg-[#333]" />
      </div>
    </section>
  );
}

function App() {
  return (
    <div className="flex h-screen min-h-[576px] flex-col overflow-hidden bg-[#161616] font-['Noto_Sans','Open_Sans',sans-serif]">
      <TitleBar />
      <MenuBar />
      <Toolbar />
      <main className="flex min-h-0 flex-1 gap-[2px]">
        <ProjectPanel />
        <CompositionPanel />
        <SidePanels />
      </main>
      <Timeline />
    </div>
  );
}

export default App;
